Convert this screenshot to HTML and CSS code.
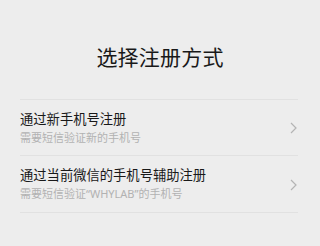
FILE: index.html
```html
<!DOCTYPE html>
<html lang="zh-CN">
<head>
<meta charset="utf-8">
<link rel="stylesheet" href="styles.css">
</head>
<body>
<div class="page">
  <h1 class="title">选择注册方式</h1>
  <ul class="list">
    <li class="row">
      <div class="text">
        <div class="row-title">通过新手机号注册</div>
        <div class="row-sub">需要短信验证新的手机号</div>
      </div>
      <svg class="chev" width="7" height="12" viewBox="0 0 7 12"><polyline points="1,1 6,6 1,11" fill="none" stroke="#b4b4b4" stroke-width="1.2"/></svg>
    </li>
    <li class="row">
      <div class="text">
        <div class="row-title">通过当前微信的手机号辅助注册</div>
        <div class="row-sub">需要短信验证<span class="latin">“WHYLAB”</span>的手机号</div>
      </div>
      <svg class="chev" width="7" height="12" viewBox="0 0 7 12"><polyline points="1,1 6,6 1,11" fill="none" stroke="#b4b4b4" stroke-width="1.2"/></svg>
    </li>
  </ul>
</div>
</body>
</html>
```
FILE: styles.css
```css
html, body {
  margin: 0;
  padding: 0;
  background: #ededed;
}
body {
  font-family: "Noto Sans CJK SC", "Noto Sans", sans-serif;
  color: #191919;
  width: 320px;
  height: 246px;
  overflow: hidden;
}
.page {
  padding-top: 42px;
}
.title {
  margin: 0 0 29px;
  font-size: 21px;
  font-weight: 400;
  line-height: 28px;
  text-align: center;
  letter-spacing: 0.2px;
}
.list {
  list-style: none;
  margin: 0 22px 0 20px;
  padding: 0;
  border-bottom: 1px solid #e1e1e1;
}
.row {
  display: flex;
  align-items: center;
  justify-content: space-between;
  border-top: 1px solid #e1e1e1;
  padding: 10px 1px 9px 0;
}
.row-title {
  font-size: 13.3px;
  line-height: 18px;
  color: #191919;
}
.row-sub {
  font-size: 11px;
  line-height: 18px;
  color: #b2b2b2;
}
.latin {
  font-family: "Noto Sans", "Noto Sans CJK SC", sans-serif;
}
.chev {
  display: block;
}
```
